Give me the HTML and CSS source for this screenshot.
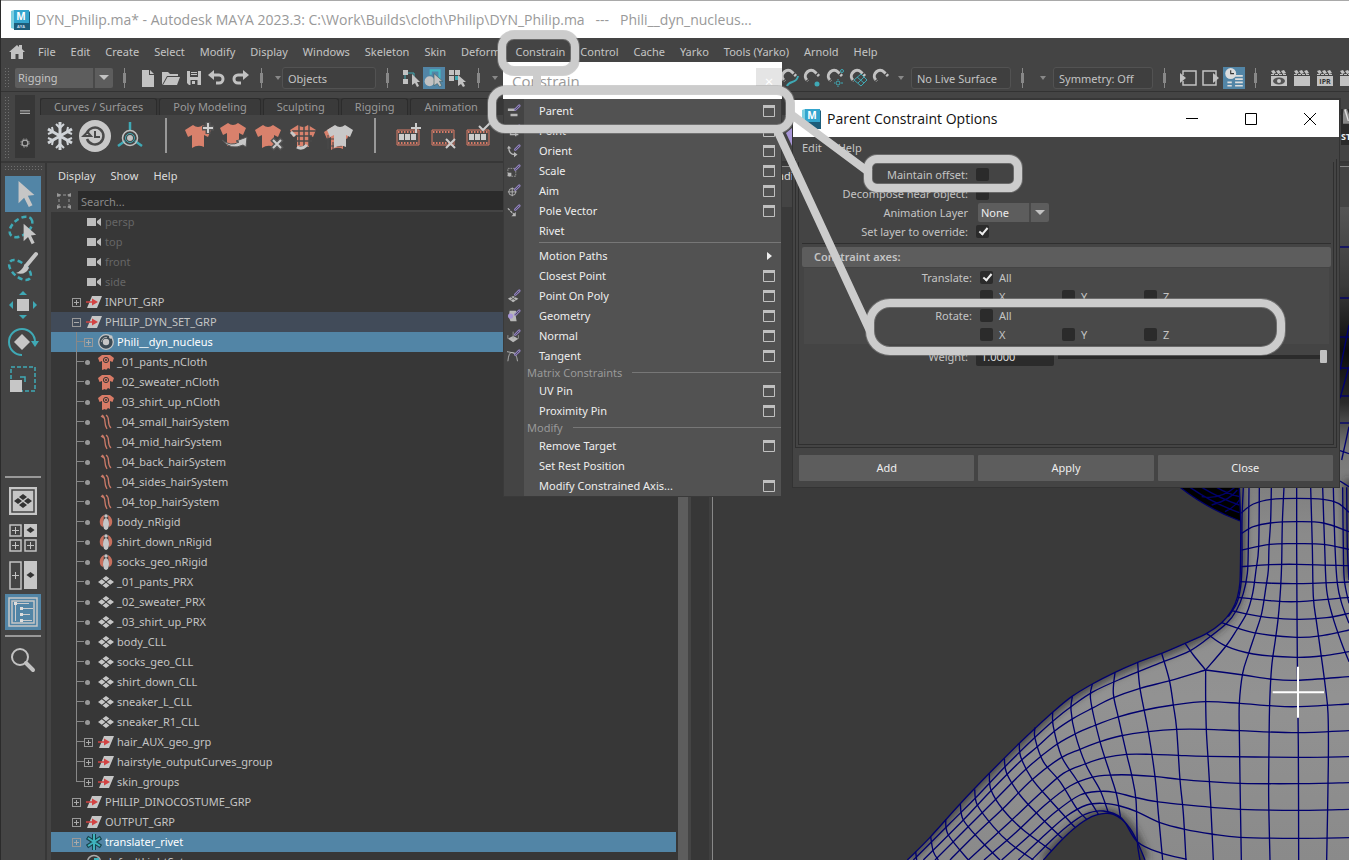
FILE: index.html
```html
<!DOCTYPE html>
<html lang="en">
<head>
<meta charset="utf-8">
<title>DYN_Philip.ma* - Autodesk MAYA 2023.3</title>
<link rel="stylesheet" href="styles.css">
</head>
<body>
<svg class="defs" aria-hidden="true">
  <symbol id="cam" viewBox="0 0 16 16"><path d="M1 4h9v8H1zM11 7l4-3v8l-4-3z" fill="#bdbdbd"/></symbol>
  <symbol id="grp" viewBox="0 0 16 16"><path d="M6 2h10l-5 12H1z" fill="#c6c6c6"/><path d="M0 8h8" stroke="#d34343" stroke-width="1.500"/><path d="M6 4.500l6 3.500-6 3.500z" fill="#d34343"/></symbol>
  <symbol id="nucleus" viewBox="0 0 16 16"><circle cx="8" cy="8" r="7.300" fill="#3c4a54" stroke="#c6c6c6" stroke-width="1.300"/><circle cx="8" cy="8" r="3.200" fill="#c6c6c6"/><path d="M3.500 8A4.800 4.800 0 0 1 9 3.400" stroke="#aaa" fill="none"/><circle cx="12.800" cy="3" r="1.800" fill="#c6c6c6"/></symbol>
  <symbol id="cloth" viewBox="0 0 16 16"><path d="M4 1h8l4 3-1.500 4-2.500-1v8l-2-1-2 2-1-1-3 1V7L1.500 8 0 4z" fill="#d97b66"/><circle cx="8" cy="6" r="2.600" fill="none" stroke="#373737"/><circle cx="8" cy="6" r="1" fill="#373737"/></symbol>
  <symbol id="hair" viewBox="0 0 16 16"><path d="M4 1c5 3 1 8 5 14M8 1c5 3 0 8 5 13M3 2l3 2" fill="none" stroke="#c97a68" stroke-width="1.300"/></symbol>
  <symbol id="rigid" viewBox="0 0 16 16"><path d="M6 1C0 4 1 12 5 13zM10 1c6 3 5 11 1 12z" fill="#c7705e"/><circle cx="8" cy="2" r="1.800" fill="#c6c6c6"/><ellipse cx="8" cy="10" rx="3" ry="6" fill="#c6c6c6"/></symbol>
  <symbol id="mesh" viewBox="0 0 16 16"><path d="M8 2l3.500 2.500L8 7.200 4.500 4.500zM8 8.800l3.500 2.700L8 14l-3.500-2.500zM3.800 5.300L7.300 8l-3.500 2.700L0 8zM12.200 5.300L16 8l-3.800 2.700L8.700 8z" fill="#c6c6c6"/></symbol>
  <symbol id="locator" viewBox="0 0 16 16"><path d="M8 0v16M1 3.500l14 9M15 3.500l-14 9" stroke="#17444c" stroke-width="4"/><path d="M8 0v16M2 4l12 8M14 4L2 12" stroke="#3fb3bd" stroke-width="2"/></symbol>
  <symbol id="lightset" viewBox="0 0 16 16"><circle cx="8" cy="8" r="6.500" fill="none" stroke="#aaa" stroke-width="1.500"/><path d="M8 4h5v5H8z" fill="#3fb3bd"/></symbol>
  <symbol id="pen" viewBox="0 0 16 16"><path d="M14 2L9.500 6.500" stroke="#8f80bd" stroke-width="3" stroke-linecap="round"/><path d="M14 2L9.500 6.500" stroke="#494359" stroke-width="1"/></symbol>
  <symbol id="box" viewBox="0 0 12 12"><path d="M.5 1h11v10.500H.5z" fill="none" stroke="#c0c0c0"/><path d="M0 0h12v3H0z" fill="#c0c0c0"/></symbol>
  <symbol id="shirt" viewBox="0 0 26 26"><path d="M8 2q5 4 10 0l8 5-3 7-4-2v12q-6-3-12 1V12l-4 2-3-7z"/></symbol>
  <symbol id="film" viewBox="0 0 26 26"><path d="M2 5h22v15H2z" fill="#4a4a4a" stroke="#d97b66"/><path d="M3 7h20M3 18h20" stroke="#d97b66" stroke-width="2" stroke-dasharray="1.500 1.500"/></symbol>
  <symbol id="magnet" viewBox="0 0 20 20"><path d="M3 11C0 6 7-1 12 4l4 4M5 13l-2-2M14 6l2 2" fill="none" stroke="#c2c2c2" stroke-width="3"/><path d="M3 13.500l3-2.600M12 8l4-4" stroke="#444" stroke-width="1.200"/></symbol>
  <symbol id="clap" viewBox="0 0 20 20"><path d="M2 8h16v10H2z" fill="#c2c2c2"/><path d="M2 3l3-1 2 3-3 1zM7 3l3-1 2 3-3 1zM12 3l3-1 2 3-3 1z" fill="#c2c2c2"/><path d="M2 6.500h16" stroke="#c2c2c2" stroke-dasharray="3 1"/></symbol>
  <symbol id="cursor" viewBox="0 0 20 30"><path d="M2 1v24l6-6 5 10 4-2-5-10 7-1z" fill="#c6c6c6"/></symbol>
  <symbol id="maya" viewBox="0 0 20 20"><path d="M0 1l3-1v19l-3-1z" fill="#7ccfe0"/><path d="M3 0h15v13H3z" fill="#34a5cd"/><path d="M18 1l1 1v18H3v-7h15z" fill="#1d5d7a"/></symbol>
</svg>

<div class="app">
  <header class="titlebar"><svg class="logo" viewBox="0 0 20 20"><use href="#maya"/><text x="10" y="10" class="logo-m">M</text><text x="10" y="18" class="logo-s">AYA</text></svg><h1>DYN_Philip.ma* - Autodesk MAYA 2023.3: C:\Work\Builds\cloth\Philip\DYN_Philip.ma &nbsp; --- &nbsp; Phili__dyn_nucleus...</h1></header>

  <nav class="menubar" aria-label="Main">
    <svg class="home" viewBox="0 0 16 15"><path d="M0 8l8-7 2 2V1h3v4l3 3h-2v7H9.500v-5h-3v5H2V8z" fill="#c2c2c2"/></svg>
    <button>File</button><button>Edit</button><button>Create</button><button>Select</button><button>Modify</button><button>Display</button><button>Windows</button><button>Skeleton</button><button>Skin</button><button>Deform</button><button class="open">Constrain</button><button>Control</button><button>Cache</button><button>Yarko</button><button>Tools (Yarko)</button><button>Arnold</button><button>Help</button>
  </nav>

  <div class="status">
    <i class="grip"></i>
    <span class="combo mode"><select aria-label="Menu set"><option>Rigging</option></select></span>
    <i class="sep"></i>
    <div class="tools">
      <svg viewBox="0 0 20 20"><path d="M4 2h7v5h5v12H4z" fill="#c2c2c2"/><path d="M12 2l4 4h-4z" fill="#c2c2c2"/></svg>
      <svg viewBox="0 0 20 20"><path d="M1 17V4h6l2 2h8v2H6z" fill="#c2c2c2"/><path d="M6.500 9H19l-3 8H2z" fill="#c2c2c2"/></svg>
      <svg viewBox="0 0 20 20"><path d="M3 3h14v14H5l-2-2z" fill="#c2c2c2"/><path d="M6 3h8v6H6zM6.500 12h7v5h-7z" fill="#444"/><path d="M7 4h6v1H7zM7 6h6v1H7zM8 13h3v3H8z" fill="#c2c2c2"/></svg>
      <svg viewBox="0 0 20 20"><path d="M5 7h7a4 4 0 0 1 0 8H9" fill="none" stroke="#c2c2c2" stroke-width="3"/><path d="M1 7l6-5v10z" fill="#c2c2c2"/></svg>
      <svg viewBox="0 0 20 20"><path d="M14 7H8a4 4 0 0 0 0 8h3" fill="none" stroke="#c2c2c2" stroke-width="3"/><path d="M19 7l-6-5v10z" fill="#c2c2c2"/></svg>
    </div>
    <i class="sep"></i><i class="drop"></i>
    <input class="field" value="Objects" aria-label="Selection mask">
    <i class="sep"></i>
    <div class="tools">
      <svg viewBox="0 0 20 20"><path d="M2 2h5v5H2zM2 11h5v5H2z" fill="#c2c2c2"/><path d="M4 7v4M7 5h6v6" stroke="#3fa9b5" fill="none"/><path d="M11 6v11l3-2 2 4 2-1-2-4h3z" fill="#c2c2c2"/></svg>
      <svg class="on" viewBox="0 0 20 20"><circle cx="6" cy="13" r="4.500" fill="#c2c2c2"/><path d="M7 7V3h8v8" fill="none" stroke="#45b6c4" stroke-width="2"/><path d="M10 6v11l3-2 2 3 2-1-2-4h3z" fill="#c2c2c2" stroke="#355" stroke-width=".5"/></svg>
      <svg viewBox="0 0 20 20"><path d="M2 2h5v5H2zM8 2h5v5H8zM2 8h5v5H2z" fill="#c2c2c2"/><path d="M8 8h4v4H8z" fill="#3fa9b5"/><path d="M11 7v11l3-2 2 3 2-1-2-4h3z" fill="#c2c2c2"/></svg>
    </div>
    <i class="sep"></i><i class="drop"></i>
    <div class="tools snaps">
      <svg viewBox="0 0 20 20"><use href="#magnet"/><path d="M7 18c2-6 10-2 11-10" stroke="#3fa9b5" stroke-width="2" fill="none"/></svg>
      <svg viewBox="0 0 20 20"><use href="#magnet"/><circle cx="14" cy="16" r="2.500" fill="#3fa9b5"/></svg>
      <svg viewBox="0 0 20 20"><use href="#magnet"/><circle cx="12" cy="15" r="2" fill="none" stroke="#3fa9b5"/><path d="M12 11v1M12 18v1M8 15h1M15 15h2" stroke="#3fa9b5"/><circle cx="16" cy="3" r="1.500" fill="none" stroke="#3fa9b5"/></svg>
      <svg viewBox="0 0 20 20"><use href="#magnet"/><path d="M5 12l7-6 6 6-6 6zM8 9l7 6M9 15l6-6" stroke="#3fa9b5" fill="none"/></svg>
      <svg viewBox="0 0 20 20"><use href="#magnet"/></svg>
    </div>
    <i class="drop wide"></i>
    <input class="field live" value="No Live Surface" aria-label="Live surface">
    <i class="sep"></i><i class="drop wide"></i>
    <input class="field live" value="Symmetry: Off" aria-label="Symmetry">
    <i class="sep"></i>
    <div class="tools">
      <svg viewBox="0 0 20 20"><path d="M5 7V3h13v14H5v-4" fill="none" stroke="#c2c2c2" stroke-width="1.500"/><path d="M2 5l6 5-6 5z" fill="#c2c2c2"/></svg>
      <svg viewBox="0 0 20 20"><path d="M2 3h13v14H2z" fill="none" stroke="#c2c2c2" stroke-width="1.500"/><path d="M12 5l6 5-6 5z" fill="#c2c2c2"/></svg>
      <svg class="on" viewBox="0 0 20 20"><circle cx="7" cy="6" r="5" fill="#ddd"/><path d="M7 3v3h3" stroke="#333" fill="none"/><path d="M11 8h7M11 11h7M11 14h7M11 17h7M4 14h4M4 17h4" stroke="#ddd" stroke-width="1.500"/></svg>
    </div>
    <i class="sep"></i>
    <div class="tools">
      <svg viewBox="0 0 20 20"><use href="#clap"/><ellipse cx="10" cy="13" rx="6" ry="3.500" fill="#555"/><circle cx="10" cy="13" r="2" fill="#ccc"/></svg>
      <svg viewBox="0 0 20 20"><use href="#clap"/></svg>
      <svg viewBox="0 0 20 20"><use href="#clap"/><text x="10" y="16" class="ipr">IPR</text></svg>
      <svg viewBox="0 0 20 20"><use href="#clap"/><circle cx="14" cy="14" r="3" fill="#3fa9b5"/></svg>
    </div>
  </div>

  <section class="shelf">
    <i class="grip tall"></i>
    <div class="shelf-side"><svg viewBox="0 0 12 6"><path d="M0 1.500h12M0 4.500h12" stroke="#aaa" stroke-width="1.500"/></svg><svg viewBox="0 0 12 12"><circle cx="6" cy="6" r="3.500" fill="none" stroke="#aaa" stroke-width="1.500"/><circle cx="6" cy="6" r="5" fill="none" stroke="#aaa" stroke-dasharray="2 2"/></svg></div>
    <div class="shelf-body">
      <div class="tabs"><button>Curves / Surfaces</button><button>Poly Modeling</button><button>Sculpting</button><button>Rigging</button><button>Animation</button></div>
      <div class="shelf-icons">
        <svg viewBox="0 0 32 32"><g stroke="#d0d4d8" stroke-width="3" fill="none"><path d="M16 2v28M4 9l24 14M28 9L4 23"/><path d="M12 4l4 4 4-4M12 28l4-4 4 4M4 14l5-2-1-5M28 14l-5-2 1-5M4 18l5 2-1 5M28 18l-5 2 1 5" stroke-width="2"/></g></svg>
        <svg viewBox="0 0 32 32"><circle cx="16" cy="16" r="16" fill="#c8c8c8"/><path d="M8 13a8.500 8.500 0 1 1 0 6" fill="none" stroke="#4a4a4a" stroke-width="2.500"/><path d="M4.500 16l4-4 3.500 4zM16 11v6h5" stroke="#4a4a4a" stroke-width="2" fill="none"/></svg>
        <svg viewBox="0 0 32 32"><path d="M16 2v8M4 26l7-5M28 26l-7-5" stroke="#3fa9b5" stroke-width="2.500"/><circle cx="16" cy="18" r="7.500" fill="none" stroke="#c2c2c2" stroke-width="1.500"/><circle cx="16" cy="18" r="4.500" fill="none" stroke="#3fa9b5"/><circle cx="16" cy="18" r="3" fill="#c2c2c2"/></svg>
        <i class="bar"></i>
        <svg viewBox="0 0 32 32"><use href="#shirt" x="2" y="3" width="26" height="26" fill="#d9816c"/><path d="M25 2v12M19 8h12" stroke="#555" stroke-width="5"/><path d="M25 3v10M20 8h10" stroke="#d0d0d0" stroke-width="2"/></svg>
        <svg viewBox="0 0 32 32"><use href="#shirt" x="2" y="1" width="26" height="26" fill="#d9816c"/><path d="M4 20q9 7 17 2l-3-1 11-4-1 10-3-2q-12 6-21-5z" fill="#c8c8c8" stroke="#555"/></svg>
        <svg viewBox="0 0 32 32"><use href="#shirt" x="2" y="3" width="26" height="26" fill="#d9816c"/><path d="M19 19l10 10M29 19L19 29" stroke="#555" stroke-width="5"/><path d="M20 20l8 8M28 20l-8 8" stroke="#ccc" stroke-width="2"/></svg>
        <svg viewBox="0 0 32 32"><use href="#shirt" x="2" y="3" width="26" height="26" fill="#d9816c"/><path d="M11 5v20M16 6v20M21 5v21M4 11h24M7 16h17M7 21h17" stroke="#4a4a4a" stroke-width="1.500"/><path d="M3 12l4 4M9 27q5 3 10-2" stroke="#c8c8c8" stroke-width="3" fill="none"/></svg>
        <svg viewBox="0 0 32 32"><use href="#shirt" x="1" y="5" width="26" height="26" fill="#d9816c"/><path d="M5 15v14M10 22v8M2 19h10M7 26h12" stroke="#4a4a4a"/><use href="#shirt" x="4" y="3" width="26" height="26" fill="#c8c8c8"/></svg>
        <i class="bar"></i>
        <svg viewBox="0 0 32 32"><use href="#film" x="3" y="5" width="26" height="26"/><path d="M7 14h5v6H7zM13 14h5v6h-5zM19 14h5v6h-5z" fill="#ccc"/><path d="M24 3v10M19 8h10" stroke="#ccc" stroke-width="2"/></svg>
        <svg viewBox="0 0 32 32"><use href="#film" x="3" y="5" width="26" height="26"/><path d="M19 19l9 9M28 19l-9 9" stroke="#ccc" stroke-width="2"/></svg>
        <svg viewBox="0 0 32 32"><use href="#film" x="3" y="5" width="26" height="26"/><path d="M7 14h5v6H7zM13 14h5v6h-5zM19 14h5v6h-5z" fill="#ccc"/><path d="M17 6l4 4 7-7" stroke="#ccc" stroke-width="2" fill="none"/></svg>
      </div>
    </div>
    <div class="shelf-end"><svg viewBox="0 0 12 30"><path d="M1 0h5l3 8 2-6v20H0V8z" fill="#888"/><path d="M2 2l5 16h2L4 0z" fill="#ddd"/></svg><b>ST</b></div>
  </section>

  <main class="work">
    <aside class="toolbox">
      <i class="grip wide"></i>
      <button class="on" aria-label="Select"><svg viewBox="0 0 36 36"><use href="#cursor" x="11" y="4" width="20" height="28"/></svg></button>
      <button aria-label="Lasso"><svg viewBox="0 0 36 36"><ellipse cx="16" cy="14" rx="13" ry="8" transform="rotate(-38 16 14)" fill="none" stroke="#3fa9b5" stroke-width="2.500" stroke-dasharray="5 3"/><use href="#cursor" x="16" y="10" width="17" height="22"/></svg></button>
      <button aria-label="Paint select"><svg viewBox="0 0 36 36"><ellipse cx="15" cy="20" rx="13" ry="7" transform="rotate(40 15 20)" fill="none" stroke="#3fa9b5" stroke-width="2.500" stroke-dasharray="5 3"/><path d="M31 4L21 16" stroke="#c6c6c6" stroke-width="4" stroke-linecap="round"/><path d="M20 14l4 4q-4 8-13 5 5-1 9-9z" fill="#c6c6c6"/></svg></button>
      <button aria-label="Move"><svg viewBox="0 0 36 36"><path d="M12 12h12v12H12z" fill="#c6c6c6"/><path d="M18 4l4 4h-8zM18 32l4-4h-8zM4 18l4-4v8zM32 18l-4-4v8z" fill="#3fa9b5"/></svg></button>
      <button aria-label="Rotate"><svg viewBox="0 0 36 36"><path d="M17 10l8 8-8 8-8-8z" fill="#c6c6c6"/><path d="M17 31A13 13 0 1 1 30 18" fill="none" stroke="#3fa9b5" stroke-width="2"/><path d="M26 17h8l-4 6z" fill="#3fa9b5"/></svg></button>
      <button aria-label="Scale"><svg viewBox="0 0 36 36"><path d="M6 6h24v24H6z" fill="none" stroke="#3fa9b5" stroke-width="1.500" stroke-dasharray="4 2"/><path d="M5 19h12v12H5z" fill="#c6c6c6"/><path d="M15 16h5v5" fill="none" stroke="#3fa9b5" stroke-width="1.500"/></svg></button>
      <hr class="first">
      <button aria-label="Single view"><svg viewBox="0 0 36 36"><path d="M4 4h28v28H4z" fill="#c6c6c6"/><path d="M7 7h22v22H7z" fill="none" stroke="#444" stroke-width="1.500"/><path d="M18 11l4 3-4 3-4-3zM18 19l4 3-4 3-4-3zM13 15l4 3-4 3-4-3zM23 15l4 3-4 3-4-3z" fill="#333"/></svg></button>
      <button aria-label="Four view"><svg viewBox="0 0 36 36"><path d="M5 5h11v11H5zM5 20h11v11H5zM20 20h11v11H20z" fill="none" stroke="#c2c2c2" stroke-width="1.500"/><path d="M19 4h13v13H19z" fill="#c6c6c6"/><path d="M10.500 7v7M7 10.500h7M10.500 22v7M7 25.500h7M25.500 22v7M22 25.500h7" stroke="#c2c2c2"/><path d="M25.500 7l4 3-4 3-4-3z" fill="#333"/></svg></button>
      <button aria-label="Two view"><svg viewBox="0 0 36 36"><path d="M5 5h11v27H5z" fill="none" stroke="#c2c2c2" stroke-width="1.500"/><path d="M19 4h13v28H19z" fill="#c6c6c6"/><path d="M10.500 15v7M7 18.500h7" stroke="#c2c2c2"/><path d="M25.500 15l4 3-4 3-4-3z" fill="#333"/></svg></button>
      <button class="on" aria-label="Outliner view"><svg viewBox="0 0 36 36"><path d="M4 4h28v28H4zM7 7h22v22H7z" fill="none" stroke="#c6c6c6" stroke-width="1.500"/><path d="M9 8h3v3H9zM15 13h3v3h-3zM15 19h3v3h-3zM15 25h3v3h-3z" fill="#ddd"/><path d="M12 9.500h12M10.500 11v16M18 14.500h10M18 20.500h7M18 26.500h9" stroke="#ccc"/></svg></button>
      <hr>
      <button aria-label="Search tools"><svg viewBox="0 0 36 36"><circle cx="15" cy="15" r="8" fill="none" stroke="#c2c2c2" stroke-width="2"/><path d="M21 21l7 7" stroke="#c2c2c2" stroke-width="4" stroke-linecap="round"/></svg></button>
    </aside>

    <section class="outliner">
      <nav class="panel-menu" aria-label="Outliner"><button>Display</button><button>Show</button><button>Help</button></nav>
      <div class="search"><svg viewBox="0 0 14 16"><path d="M2 1v14M12 1v14M1 2h12M1 14h12" stroke="#999" stroke-dasharray="3 2" fill="none"/><path d="M0 0l4 2-4 2zM14 0l-4 2 4 2zM0 12l4 2-4 2zM14 12l-4 2 4 2z" fill="#999"/></svg><input type="search" placeholder="Search..." aria-label="Search"></div>
      <div class="tree-wrap">
        <ul class="tree">
          <li><div class="row dim"><i class="none"></i><svg><use href="#cam"/></svg>persp</div></li>
          <li><div class="row dim"><i class="none"></i><svg><use href="#cam"/></svg>top</div></li>
          <li><div class="row dim"><i class="none"></i><svg><use href="#cam"/></svg>front</div></li>
          <li><div class="row dim"><i class="none"></i><svg><use href="#cam"/></svg>side</div></li>
          <li><div class="row"><button class="tog" aria-label="Expand"></button><svg><use href="#grp"/></svg>INPUT_GRP</div></li>
          <li><div class="row parent"><button class="tog minus" aria-label="Collapse"></button><svg><use href="#grp"/></svg>PHILIP_DYN_SET_GRP</div>
            <ul>
              <li><div class="row sel"><button class="tog" aria-label="Expand"></button><svg><use href="#nucleus"/></svg>Phili__dyn_nucleus</div></li>
              <li><div class="row"><i class="dot"></i><svg><use href="#cloth"/></svg>_01_pants_nCloth</div></li>
              <li><div class="row"><i class="dot"></i><svg><use href="#cloth"/></svg>_02_sweater_nCloth</div></li>
              <li><div class="row"><i class="dot"></i><svg><use href="#cloth"/></svg>_03_shirt_up_nCloth</div></li>
              <li><div class="row"><i class="dot"></i><svg><use href="#hair"/></svg>_04_small_hairSystem</div></li>
              <li><div class="row"><i class="dot"></i><svg><use href="#hair"/></svg>_04_mid_hairSystem</div></li>
              <li><div class="row"><i class="dot"></i><svg><use href="#hair"/></svg>_04_back_hairSystem</div></li>
              <li><div class="row"><i class="dot"></i><svg><use href="#hair"/></svg>_04_sides_hairSystem</div></li>
              <li><div class="row"><i class="dot"></i><svg><use href="#hair"/></svg>_04_top_hairSystem</div></li>
              <li><div class="row"><i class="dot"></i><svg><use href="#rigid"/></svg>body_nRigid</div></li>
              <li><div class="row"><i class="dot"></i><svg><use href="#rigid"/></svg>shirt_down_nRigid</div></li>
              <li><div class="row"><i class="dot"></i><svg><use href="#rigid"/></svg>socks_geo_nRigid</div></li>
              <li><div class="row"><i class="dot"></i><svg><use href="#mesh"/></svg>_01_pants_PRX</div></li>
              <li><div class="row"><i class="dot"></i><svg><use href="#mesh"/></svg>_02_sweater_PRX</div></li>
              <li><div class="row"><i class="dot"></i><svg><use href="#mesh"/></svg>_03_shirt_up_PRX</div></li>
              <li><div class="row"><i class="dot"></i><svg><use href="#mesh"/></svg>body_CLL</div></li>
              <li><div class="row"><i class="dot"></i><svg><use href="#mesh"/></svg>socks_geo_CLL</div></li>
              <li><div class="row"><i class="dot"></i><svg><use href="#mesh"/></svg>shirt_down_CLL</div></li>
              <li><div class="row"><i class="dot"></i><svg><use href="#mesh"/></svg>sneaker_L_CLL</div></li>
              <li><div class="row"><i class="dot"></i><svg><use href="#mesh"/></svg>sneaker_R1_CLL</div></li>
              <li><div class="row"><button class="tog" aria-label="Expand"></button><svg><use href="#grp"/></svg>hair_AUX_geo_grp</div></li>
              <li><div class="row"><button class="tog" aria-label="Expand"></button><svg><use href="#grp"/></svg>hairstyle_outputCurves_group</div></li>
              <li><div class="row"><button class="tog" aria-label="Expand"></button><svg><use href="#grp"/></svg>skin_groups</div></li>
            </ul>
          </li>
          <li><div class="row"><button class="tog" aria-label="Expand"></button><svg><use href="#grp"/></svg>PHILIP_DINOCOSTUME_GRP</div></li>
          <li><div class="row"><button class="tog" aria-label="Expand"></button><svg><use href="#grp"/></svg>OUTPUT_GRP</div></li>
          <li><div class="row sel"><button class="tog" aria-label="Expand"></button><svg><use href="#locator"/></svg>translater_rivet</div></li>
          <li><div class="row"><i class="none"></i><svg><use href="#lightset"/></svg>defaultLightSet</div></li>
        </ul>
        <i class="scroll"></i>
      </div>
    </section>

    <section class="viewport">
      <div class="view-head"><span>Shading</span></div>
      <svg class="scene" viewBox="0 -819 1347 1959" aria-label="Character wireframe">
        <defs>
          <linearGradient id="skin" x1="0" y1="-819" x2="0" y2="1140" gradientUnits="userSpaceOnUse"><stop offset="0" stop-color="#555"/><stop offset=".12" stop-color="#3a3a3a"/><stop offset=".22" stop-color="#0c0c0c"/><stop offset=".3" stop-color="#2a2a2a"/><stop offset=".37" stop-color="#777"/><stop offset=".5" stop-color="#8a8a8a"/><stop offset=".75" stop-color="#929292"/><stop offset="1" stop-color="#8a8a8a"/></linearGradient>
          <filter id="soft" x="-10%" y="-10%" width="120%" height="120%"><feGaussianBlur stdDeviation="13"/></filter>
          <clipPath id="inside"><path id="clip-shape"/></clipPath>
        </defs>
        <path d="M800 -10L840 22Q920 85 1020 123V-10z" fill="#000"/>
        <path d="M840 22Q920 85 1020 123M870 22Q940 70 1018 98M905 22Q960 55 1018 75M950 22Q980 40 1018 50M905 50Q960 60 1005 22M935 75Q990 60 1012 30M975 95Q1005 80 1018 60" fill="none" stroke="#00006a" stroke-width="4"/>
        <path id="body-shape" fill="url(#skin)"/>
        <g clip-path="url(#inside)"><path id="body-shade" fill="none" stroke="#2c2c2c" stroke-width="20" filter="url(#soft)"/></g>
        <g id="wires" fill="none" stroke="#00006e" stroke-width="4"></g>
        <path d="M1118 637H1272M1194 560V713" stroke="#fff" stroke-width="6"/>
      </svg>
    </section>
  </main>
</div>

<section class="popup" aria-label="Constrain menu">
  <header><span>Constrain</span><button aria-label="Close menu">×</button></header>
  <div class="items">
    <button class="item"><svg class="mi" viewBox="0 0 16 16"><path d="M1 5h8v3H1zM4 11h8v3H4z" fill="#b8b8b8"/><use href="#pen"/></svg>Parent<svg class="ob"><use href="#box"/></svg></button>
    <button class="item"><svg class="mi" viewBox="0 0 16 16"><path d="M4 3v9h9M2 5h8v9" stroke="#b8b8b8" fill="none" stroke-width="1.500"/><use href="#pen"/></svg>Point<svg class="ob"><use href="#box"/></svg></button>
    <button class="item"><svg class="mi" viewBox="0 0 16 16"><path d="M2 4q0 8 7 8" stroke="#b8b8b8" fill="none" stroke-width="1.500"/><path d="M0 5l2-3 3 3zM8 9l4 3-4 3z" fill="#b8b8b8"/><use href="#pen"/></svg>Orient<svg class="ob"><use href="#box"/></svg></button>
    <button class="item"><svg class="mi" viewBox="0 0 16 16"><path d="M1 5h9v9H1z" stroke="#999" stroke-dasharray="2 1" fill="none"/><path d="M1 10h4v4H1z" fill="#b8b8b8"/><use href="#pen"/></svg>Scale<svg class="ob"><use href="#box"/></svg></button>
    <button class="item"><svg class="mi" viewBox="0 0 16 16"><circle cx="6" cy="9" r="4" fill="none" stroke="#b8b8b8"/><path d="M6 4v10M1 9h10" stroke="#b8b8b8"/><use href="#pen"/></svg>Aim<svg class="ob"><use href="#box"/></svg></button>
    <button class="item"><svg class="mi" viewBox="0 0 16 16"><path d="M1 5l7 7" stroke="#b8b8b8" stroke-dasharray="3 1" stroke-width="1.500"/><path d="M10 9v5H5z" fill="#b8b8b8"/><use href="#pen"/></svg>Pole Vector<svg class="ob"><use href="#box"/></svg></button>
    <button class="item"><i class="mi"></i>Rivet</button>
    <hr>
    <button class="item"><i class="mi"></i>Motion Paths<svg class="sub" viewBox="0 0 5 8"><path d="M0 0l5 4-5 4z" fill="#eee"/></svg></button>
    <button class="item"><i class="mi"></i>Closest Point<svg class="ob"><use href="#box"/></svg></button>
    <button class="item"><svg class="mi" viewBox="0 0 16 16"><path d="M7 8l6 3-6 4-6-4z" fill="#b8b8b8"/><path d="M4 9l6 4M10 9l-6 4" stroke="#555"/><use href="#pen"/></svg>Point On Poly<svg class="ob"><use href="#box"/></svg></button>
    <button class="item"><svg class="mi" viewBox="0 0 16 16"><path d="M3 2h7l2 4-2 2 1 6H4L2 9z" fill="#b8b8b8"/><circle cx="4" cy="8" r="3" fill="#a795d6"/><use href="#pen"/></svg>Geometry<svg class="ob"><use href="#box"/></svg></button>
    <button class="item"><svg class="mi" viewBox="0 0 16 16"><path d="M7 8l6 3-6 4-6-4z" fill="#b8b8b8"/><path d="M7 11V3M1 11V7M13 11V7" stroke="#999"/><use href="#pen"/></svg>Normal<svg class="ob"><use href="#box"/></svg></button>
    <button class="item"><svg class="mi" viewBox="0 0 16 16"><path d="M1 14q1-11 5-10 5 1 6 10M0 3l10 2" stroke="#b8b8b8" fill="none"/><use href="#pen"/></svg>Tangent<svg class="ob"><use href="#box"/></svg></button>
    <h2>Matrix Constraints</h2>
    <button class="item"><i class="mi"></i>UV Pin<svg class="ob"><use href="#box"/></svg></button>
    <button class="item"><i class="mi"></i>Proximity Pin<svg class="ob"><use href="#box"/></svg></button>
    <h2>Modify</h2>
    <button class="item"><i class="mi"></i>Remove Target<svg class="ob"><use href="#box"/></svg></button>
    <button class="item"><i class="mi"></i>Set Rest Position</button>
    <button class="item"><i class="mi"></i>Modify Constrained Axis...<svg class="ob"><use href="#box"/></svg></button>
  </div>
</section>

<section class="dialog" role="dialog" aria-labelledby="dlg-title">
  <header><svg class="logo" viewBox="0 0 20 20"><use href="#maya"/><text x="10" y="10" class="logo-m">M</text></svg><h2 id="dlg-title">Parent Constraint Options</h2>
    <button aria-label="Minimize"><svg viewBox="0 0 12 12"><path d="M0 5.500h12" stroke="#000"/></svg></button>
    <button aria-label="Maximize"><svg viewBox="0 0 12 12"><path d="M.5.5h11v11H.5z" stroke="#000" fill="none"/></svg></button>
    <button aria-label="Close"><svg viewBox="0 0 12 12"><path d="M0 0l12 12M12 0L0 12" stroke="#000"/></svg></button>
  </header>
  <nav class="dlg-menu" aria-label="Dialog"><button>Edit</button><button>Help</button></nav>
  <div class="frame">
    <div class="frame-in">
      <div class="line"><label for="mo">Maintain offset:</label><input type="checkbox" id="mo"></div>
      <div class="line"><label for="dn">Decompose near object:</label><input type="checkbox" id="dn"></div>
      <div class="line"><label for="al">Animation Layer</label><span class="combo layer"><select id="al"><option>None</option></select></span></div>
      <div class="line"><label for="so">Set layer to override:</label><input type="checkbox" id="so" checked></div>
      <h3>Constraint axes:</h3>
      <div class="axes">
        <div class="line"><label for="ta">Translate:</label><input type="checkbox" id="ta" checked><span>All</span></div>
        <div class="line"><label></label><label class="ax"><input type="checkbox">X</label><label class="ax"><input type="checkbox">Y</label><label class="ax"><input type="checkbox">Z</label></div>
        <div class="line"><label for="ra">Rotate:</label><input type="checkbox" id="ra"><span>All</span></div>
        <div class="line"><label></label><label class="ax"><input type="checkbox">X</label><label class="ax"><input type="checkbox">Y</label><label class="ax"><input type="checkbox">Z</label></div>
      </div>
      <div class="line weight"><label for="w">Weight:</label><input type="text" id="w" value="1.0000"><input type="range" min="0" max="1" step="0.01" value="1" aria-label="Weight slider"></div>
    </div>
  </div>
  <footer><button>Add</button><button>Apply</button><button>Close</button></footer>
</section>

<svg class="marks" aria-hidden="true">
  <path d="M786 133L792 128V146z" fill="#a795d6"/>
  <g fill="none" stroke="#999" stroke-width="10" opacity=".45"><rect x="502" y="35" width="73" height="36" rx="12"/><rect x="492" y="90" width="298" height="39" rx="13"/><rect x="868" y="159" width="150" height="29" rx="9"/><rect x="870" y="303" width="411" height="48" rx="20"/></g>
  <g fill="none" stroke="#ccc" stroke-width="8"><path d="M537 75V88"/><rect x="502" y="35" width="73" height="36" rx="12"/><rect x="492" y="90" width="298" height="39" rx="13"/><rect x="868" y="159" width="150" height="29" rx="9"/><rect x="870" y="303" width="411" height="48" rx="20"/><path d="M788 112L870 173M776 128L870 331"/></g>
</svg>
<script src="mesh.js"></script>
</body>
</html>
```
FILE: styles.css
```css
* { box-sizing: border-box; }
body { margin: 0; height: 100vh; overflow: hidden; background: #444; color: #c4c4c4; font: 11px/16px "Noto Sans", "Open Sans", sans-serif; }
button { font: inherit; color: inherit; background: none; border: 0; padding: 0; }
input, select { font: inherit; color: inherit; border: 0; margin: 0; outline: 0; }
h1, h2, h3, ul, hr { margin: 0; padding: 0; font: inherit; list-style: none; }
svg { display: block; flex: none; }
.defs { position: absolute; width: 0; height: 0; }
.app { display: flex; flex-direction: column; height: 100vh; border-left: 1px solid #2b2b2b; }
.logo { width: 20px; height: 20px; overflow: visible; }
.logo-m { font: bold 10px "Open Sans", sans-serif; fill: #fff; text-anchor: middle; }
.logo-s { font: bold 4px "Open Sans", sans-serif; fill: #cde; text-anchor: middle; }

.titlebar { display: flex; align-items: center; gap: 5px; height: 38px; flex: none; padding-left: 10px; background: #fff; border-top: 1px solid #a9a9a9; }
.titlebar h1 { font: 14px/24px "Open Sans", sans-serif; color: #999; white-space: nowrap; }

.menubar { display: flex; align-items: center; gap: 15px; height: 27px; flex: none; padding-left: 8px; white-space: nowrap; }
.home { width: 16px; height: 15px; margin-right: -2px; }

.status { display: flex; align-items: center; height: 27px; flex: none; border-bottom: 1px solid #333; overflow: hidden; }
.status > * { flex: none; }
.grip { width: 5px; height: 22px; margin: 0 6px 0 3px; background: radial-gradient(circle, #8a8a8a 1px, transparent 1px) 0 0 / 3px 3px; opacity: .6; }
.grip.tall { height: 62px; }
.grip.wide { width: 38px; height: 5px; margin: 2px 0 5px; }
.sep { width: 1px; height: 20px; margin: 0 11px; background: #888; position: relative; }
.sep::after { content: ""; position: absolute; left: -1px; top: 5px; width: 3px; height: 10px; background: #888; }
.drop { width: 6px; margin: 0 1px 0 2px; border: solid transparent; border-width: 4px 3px 0; border-top-color: #888; }
.drop.wide { margin: 0 7px 0 6px; }
.combo { display: inline-flex; position: relative; height: 20px; background: #5d5d5d; border-radius: 2px; }
.combo select { appearance: none; background: none; padding: 0 26px 0 3px; width: 100%; }
.combo::before { content: ""; position: absolute; right: 18px; top: 0; bottom: 0; width: 2px; background: #494949; }
.combo::after { content: ""; position: absolute; right: 4px; top: 7px; border: solid transparent; border-width: 5px 5px 0; border-top-color: #c2c2c2; }
.combo.mode { width: 98px; }
.tools { display: flex; gap: 3px; margin-left: 2px; }
.tools svg { width: 20px; height: 20px; }
.tools .on { background: #5285a6; width: 22px; height: 22px; margin: -1px; }
.tools.snaps { margin-left: 281px; }
.ipr { font: bold 7px "Open Sans", sans-serif; fill: #333; text-anchor: middle; }
.field { width: 94px; height: 22px; padding: 0 5px; background: #3f3f3f; border: 1px solid #525252; border-radius: 3px; }
.live { width: 100px; }

.shelf { display: flex; align-items: center; height: 71px; flex: none; border-bottom: 2px solid #373737; }
.shelf-side { display: flex; flex-direction: column; align-items: center; justify-content: space-between; width: 20px; height: 63px; padding: 12px 0 10px; background: #373737; }
.shelf-side svg { width: 10px; height: 10px; }
.shelf-body { flex: 1; align-self: stretch; margin-left: 5px; padding-top: 6px; }
.tabs { display: flex; gap: 2px; background: #373737; height: 17px; }
.tabs button { padding: 0 13px; border: 1px solid #2c2c2c; border-bottom: 0; border-radius: 3px 3px 0 0; color: #999; background: #3a3a3a; white-space: nowrap; }
.shelf-icons { display: flex; align-items: center; gap: 3px; padding: 3px 0 0 4px; }
.shelf-icons svg { width: 32px; height: 32px; }
.bar { width: 2px; height: 35px; margin: 0 13px 0 16px; background: #999; }
.shelf-end { width: 8px; overflow: hidden; color: #eee; font-size: 9px; background: #2b2b2b; }
.shelf-end svg { width: 12px; height: 20px; }

.work { display: flex; flex: 1; min-height: 0; }
.toolbox { display: flex; flex-direction: column; align-items: center; gap: 1px; width: 44px; flex: none; }
.toolbox button { width: 36px; height: 36px; }
.toolbox svg { width: 36px; height: 36px; }
.toolbox .on { background: #5285a6; }
.toolbox hr { width: 36px; height: 2px; border: 0; background: #999; margin: 4px 0; }
.toolbox .first { margin-top: 78px; }
.outliner { width: 668px; flex: none; display: flex; flex-direction: column; border-left: 2px solid #373737; padding-left: 4px; border-right: 1px solid #888; }
.panel-menu { display: flex; gap: 15px; height: 26px; align-items: center; padding-left: 7px; color: #ddd; }
.search { display: flex; align-items: center; gap: 7px; height: 23px; padding: 2px 0 2px 6px; }
.search svg { width: 14px; height: 16px; }
.search input { flex: 1; height: 19px; padding: 1px 3px 0; background: #2b2b2b; }
.search input::placeholder { color: #8a8a8a; opacity: 1; }
.tree-wrap { flex: 1; min-height: 0; display: flex; background: #373737; }
.tree { flex: 1; overflow: hidden; }
.scroll { width: 36px; background: linear-gradient(90deg, #373737 2px, #5d5d5d 2px 12px, #444 12px 15px, #373737 15px 33px, #3f3f3f 33px); }
.row { display: flex; align-items: center; height: 20px; padding-left: 21px; white-space: nowrap; position: relative; }
.row svg { width: 16px; height: 16px; margin: 0 3px 0 5px; }
.tree ul .row { padding-left: 33px; }
.tree ul .row::before { content: ""; position: absolute; left: 25px; top: 0; height: 20px; width: 1px; background: #888; }
.tree ul .row::after { content: ""; position: absolute; left: 25px; top: 9px; width: 8px; height: 1px; background: #888; }
.tree ul li:last-child .row::before { height: 10px; }
.none, .dot { width: 9px; }
.dot::after { content: ""; display: block; width: 5px; height: 5px; border-radius: 50%; background: #999; margin-left: 1px; }
.tog { width: 9px; height: 9px; border: 1px solid #999; background: linear-gradient(#aaa, #aaa) center / 5px 1px no-repeat, linear-gradient(#aaa, #aaa) center / 1px 5px no-repeat; }
.minus { background: linear-gradient(#aaa, #aaa) center / 5px 1px no-repeat; }
.dim { color: #666; }
.parent { background: #414b59; }
.sel { background: #5285a6; color: #fff; }
.viewport { flex: 1; min-width: 0; background: #3a3a3a; position: relative; overflow: hidden; display: flex; flex-direction: column; }
.view-head { height: 41px; flex: none; background: #444; border-top: 1px solid #888; padding: 1px 0 0 52px; color: #ddd; margin-top: 3px; }
.scene { width: 449px; height: 653px; align-self: flex-end; }

.popup { position: absolute; left: 503px; top: 62px; width: 279px; background: #525252; border: 1px solid #3a3a3a; border-top: 0; color: #eee; }
.popup header { display: flex; justify-content: space-between; align-items: center; height: 37px; margin: 0 -1px; padding-left: 9px; background: #fff; font: 15px/24px "Open Sans", sans-serif; color: #999; }
.popup header button { width: 26px; height: 25px; background: #e5e5e5; color: #fff; }
.items { padding-top: 2px; background: linear-gradient(90deg, #444 20px, #525252 20px); }
.item { display: flex; align-items: center; width: 100%; height: 20px; padding: 0 6px 0 3px; text-align: left; }
.mi { width: 14px; height: 14px; margin-right: 18px; }
.ob { width: 12px; height: 12px; margin: 0 0 1px auto; }
.sub { width: 5px; height: 8px; margin: 0 3px 0 auto; }
.items hr { height: 5px; border: 0; margin-left: 35px; background: linear-gradient(#777, #777) 0 1px / 100% 1px no-repeat; }
.items h2 { display: flex; align-items: center; gap: 10px; height: 15px; padding: 0 0 2px 23px; color: #999; }
.items h2::after { content: ""; flex: 1; height: 1px; background: #777; }

.dialog { position: absolute; left: 792px; top: 100px; width: 548px; height: 388px; background: #444; border: solid #333; border-width: 0 1px 1px; display: flex; flex-direction: column; }
.dialog header { display: flex; align-items: center; height: 37px; flex: none; background: #fff; padding-left: 9px; color: #111; }
.dialog h2 { font: 14px/20px "Open Sans", sans-serif; flex: 1; margin-left: 5px; }
.dialog header button { width: 59px; display: flex; justify-content: center; }
.dialog header button svg { width: 12px; height: 12px; }
.dlg-menu { display: flex; gap: 16px; padding-left: 9px; height: 22px; flex: none; align-items: center; }
.frame { flex: 1; margin: 0 2px; border: 1px solid #2f2f2f; border-top: 0; padding: 3px 2px 2px; min-height: 0; }
.frame-in { height: 100%; border: 1px solid #2f2f2f; border-top: 0; padding: 3px 2px 0 3px; }
.line { display: flex; align-items: center; height: 19px; }
.line > label:first-child { width: 166px; text-align: right; margin-right: 8px; flex: none; }
.line + .line .layer { margin-left: 2px; }
.layer { width: 71px; height: 19px; color: #eee; }
input[type="checkbox"] { appearance: none; width: 13px; height: 13px; flex: none; background: #2b2b2b; border-radius: 2px; position: relative; }
input[type="checkbox"]:checked::after { content: ""; position: absolute; left: 5px; top: 1px; width: 3px; height: 7px; border: solid #eee; border-width: 0 2px 2px 0; transform: rotate(40deg); }
.dialog h3 { font-weight: 600; margin: 6px 0 1px; height: 20px; line-height: 20px; padding-left: 12px; background: #5d5d5d; border-radius: 2px; position: relative; }
.dialog h3::before { content: ""; position: absolute; left: 0; right: 0; top: -4px; height: 1px; background: #2f2f2f; }
.axes { margin: 0 2px; background: #494949; }
.axes .line > label:first-child { width: 168px; }
.axes span { margin-left: 6px; }
.ax { display: flex; align-items: center; gap: 6px; width: 82px; }
.weight { margin-top: 3px; }
.weight input[type="text"] { width: 78px; height: 18px; padding: 0 5px; background: #2b2b2b; border-radius: 2px; color: #ddd; }
.weight input[type="range"] { appearance: none; flex: 1; min-width: 0; height: 14px; margin: 0 4px 0 4px; background: linear-gradient(#2b2b2b, #2b2b2b) center / 100% 4px no-repeat; }
.weight input[type="range"]::-webkit-slider-thumb { appearance: none; width: 7px; height: 13px; background: #c2c2c2; border-radius: 1px; }
.dialog footer { display: flex; gap: 4px; padding: 7px 6px 6px; flex: none; }
.dialog footer button { flex: 1; height: 26px; background: #5d5d5d; color: #eee; border-radius: 1px; }
.marks { position: absolute; left: 0; top: 0; width: 100%; height: 100%; pointer-events: none; }
```
FILE: mesh.js
```javascript
// Smooth path through a list of x,y points (Catmull-Rom to Bezier).
function curve(text, start) {
  const n = text.trim().split(/[\s,]+/).map(Number);
  const p = [];
  for (let i = 0; i < n.length; i += 2) p.push([n[i], n[i + 1]]);
  let d = (start || "M") + p[0];
  for (let i = 0; i < p.length - 1; i++) {
    const a = p[i - 1] || p[i], b = p[i], c = p[i + 1], e = p[i + 2] || c;
    d += "C" + [b[0] + (c[0] - a[0]) / 6, b[1] + (c[1] - a[1]) / 6, c[0] - (e[0] - b[0]) / 6, c[1] - (e[1] - b[1]) / 6, c[0], c[1]];
  }
  return d;
}

const upper = "22,1140 90,1072 180,972 268,880 358,790 458,697 515,650 577,612 645,577 713,547 785,520 855,490 920,460 965,428 995,392 1012,352 1020,305 1022,200 1022,120 1018,22 1016,-30";
const armpit = "735,1140 712,1085 690,1045 665,1018 640,1003 615,1000 575,1010 525,1043 480,1085 430,1140";
const body = curve(upper) + "V-60H1320V-819H1347V1140H735" + curve(armpit, "L") + "Z";
document.getElementById("body-shape").setAttribute("d", body);
document.getElementById("clip-shape").setAttribute("d", body);
document.getElementById("body-shade").setAttribute("d", curve(upper) + curve(armpit) + "M1347 0V300");

const lines = [
  upper, armpit,
  // neck and chest columns
  "1190,22 1190,200 1192,550 1195,800 1196,1140",
  "1030,22 1026,120 1026,250 1022,320 1010,370 985,410",
  "1114,22 1112,120 1107,200 1105,270 1098,320 1085,400 1066,460 1046,520 1028,580 1018,670 1018,760 1020,900 1024,1140",
  "1152,22 1147,130 1145,250 1142,320 1135,410 1126,480 1115,560 1109,670 1107,800 1106,950 1110,1140",
  "1078,22 1076,200 1068,270 1058,340 1040,400 1010,450 978,498 917,570",
  "917,570 917,660 919,750 925,850 932,970 940,1140",
  "1047,22 1045,200 1042,280 1030,340 1010,390 980,430 920,478 865,515 790,545 655,600 580,635 520,675 460,722 405,772 320,855 235,945 150,1030 40,1140",
  "1232,22 1237,200 1240,350 1250,430 1264,530 1276,620 1284,700 1285,850 1280,1140",
  "1268,22 1274,200 1280,330 1298,410 1325,490 1347,545",
  "1300,22 1305,200 1312,310 1325,370 1347,430",
  "1328,22 1330,200 1333,300 1347,370",
  "1340,22 1342,200 1347,300",
  // rows from neck to shoulder
  "1022,100 1060,72 1114,58 1190,55 1270,58 1315,70 1347,97",
  "1025,160 1060,140 1110,129 1190,125 1270,129 1347,155",
  "1025,210 1110,193 1190,191 1270,193 1347,208",
  "1025,260 1110,254 1190,253 1347,257",
  "1020,305 1100,309 1190,311 1347,306",
  "1012,352 1100,361 1190,365 1347,352",
  "995,392 1085,410 1190,418 1280,413 1347,400",
  "965,428 1060,458 1190,472 1270,466 1347,450",
  "920,460 975,497 1060,522 1190,532 1280,526 1347,515",
  "855,490 880,525 917,570",
  "917,570 1030,585 1110,597 1190,601 1347,590",
  // rows that run down the arm
  "917,570 810,602 720,625 635,655 580,683 520,715 465,752 410,802 365,840 275,930 190,1020 70,1140",
  "1347,672 1190,680 1110,677 1020,670 917,665 820,675 735,690 650,712 580,738 525,762 460,800 375,870 285,960 200,1045 105,1140",
  "1347,752 1190,758 1020,752 920,748 830,748 745,755 660,768 600,785 540,808 480,835 395,900 310,985 230,1060 150,1140",
  "1347,830 1190,832 925,829 835,826 755,823 680,823 615,833 555,852 490,880 415,945 330,1025 205,1140",
  "1347,908 1190,911 1020,910 930,905 840,898 770,890 695,885 640,885 575,892 510,918 435,975 350,1055 252,1140",
  "1347,988 1190,991 1020,988 935,982 850,974 770,965 705,952 645,937 600,934 540,945 465,997 390,1065 305,1140",
  "1347,1073 1190,1075 1020,1072 935,1062 855,1048 780,1028 710,995 660,978 610,970 560,975 500,1008 440,1060 355,1140",
  "860,1138 780,1118 712,1085 665,1015 610,993 555,1003 500,1040 450,1085 395,1140",
  // rings round the shoulder and arm
  "785,520 808,600 820,675 830,748 840,900 850,1000 858,1140",
  "713,547 720,625 745,755 765,890 775,1000 788,1140",
  "645,577 640,640 655,712 680,823 695,885 708,960 712,1085 720,1140",
  "577,612 572,660 600,785 630,880 650,945 662,1015",
  "517,650 513,690 525,760 558,855 600,930 625,998",
  "458,697 460,740 485,830 530,900 575,970 595,1003",
  "405,742 405,775 430,845 480,905 530,985 560,1018",
  "358,790 362,830 395,895 450,960 525,1042",
  "313,835 320,880 360,945 420,1010 487,1075",
  "268,880 273,930 310,990 370,1050 455,1112",
  "224,928 232,975 280,1040 330,1090 400,1140",
  "181,972 190,1020 240,1080 300,1140",
  "137,1018 145,1065 205,1140",
  "92,1070 100,1115 115,1140",
  "47,1115 50,1140",
  // head edge
  "1320,-699 1347,-699", "1320,-546 1347,-546", "1320,-429 1347,-429", "1320,-336 1347,-336", "1320,-252 1347,-252",
  "1320,-171 1347,-171", "1320,-88 1347,-79", "1320,3 1347,20", "1320,-330 1347,-465", "1320,-245 1347,-340", "1325,-60 1347,-160"
];
document.getElementById("wires").innerHTML = lines.map(l => '<path d="' + curve(l) + '"/>').join("");
```
